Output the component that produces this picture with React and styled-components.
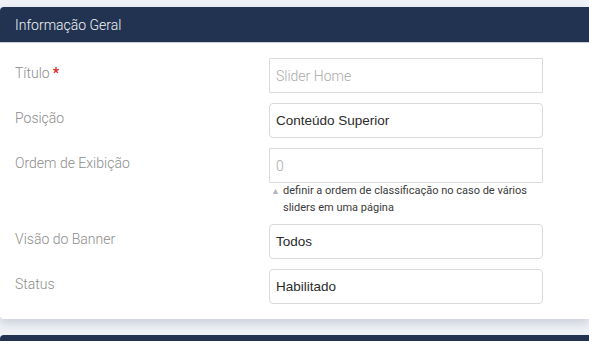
import React from 'react';
import styled, { createGlobalStyle } from 'styled-components';

const GlobalStyle = createGlobalStyle`
  body {
    margin: 0;
    background: #eef1f6;
    font-family: Roboto, "Liberation Sans", sans-serif;
    overflow: hidden;
  }
`;

const Page = styled.div`
  padding-top: 7px;
  width: 589px;
  height: 341px;
  box-sizing: border-box;
`;

const Card = styled.section`
  background: #fff;
  border-radius: 4px 0 0 4px;
  box-shadow: 0 4px 10px rgba(40, 50, 70, 0.18);
  margin-bottom: 16px;
`;

const CardHeader = styled.div`
  background: #213350;
  color: #f1f3f7;
  height: 35px;
  border-bottom: 1px solid #c9cdd5;
  border-radius: 4px 0 0 0;
  display: flex;
  align-items: center;
  padding: 0 15px;
  font-size: 14px;
  font-weight: 300;
`;

const CardBody = styled.div`
  display: grid;
  grid-template-columns: 254px 274px;
  row-gap: 10px;
  padding: 15px 0 15px 15px;
`;

const Label = styled.label`
  color: #8c8c8c;
  font-size: 14px;
  font-weight: 300;
  line-height: 20px;
  padding-top: 5px;
`;

const Required = styled.span`
  color: #e2231a;
  font-weight: 700;
  margin-left: 3px;
`;

const Field = styled.div`
  display: flex;
  flex-direction: column;
`;

const TextInput = styled.div`
  box-sizing: border-box;
  height: 35px;
  border: 1px solid #d9d9de;
  border-radius: 1px;
  padding: 0 6px;
  display: flex;
  align-items: center;
  font-family: Roboto, sans-serif;
  font-weight: 300;
  font-size: 14px;
  color: #a9a9a9;
`;

const SelectBox = styled.div`
  box-sizing: border-box;
  height: 35px;
  border: 1px solid #d9d9de;
  border-radius: 4px;
  padding: 0 6px;
  display: flex;
  align-items: center;
  font-family: "Liberation Sans", Arial, sans-serif;
  font-size: 13.5px;
  color: #2b2b2b;
`;

const Help = styled.div`
  display: grid;
  grid-template-columns: 14px 1fr;
  margin: -1px 0 -2px;
  font-size: 11px;
  line-height: 17px;
  color: #3a3a3a;
`;

const Caret = styled.span`
  color: #b4b8bf;
  font-size: 9px;
  line-height: 17px;
  padding-left: 2px;
  padding-top: 1px;
`;

const NextHeader = styled.div`
  background: #213350;
  height: 20px;
  border-radius: 4px 0 0 0;
`;

export default function App() {
  return (
    <Page>
      <GlobalStyle />
      <Card>
        <CardHeader>Informação Geral</CardHeader>
        <CardBody>
          <Label>Título<Required>*</Required></Label>
          <TextInput>Slider Home</TextInput>

          <Label>Posição</Label>
          <SelectBox>Conteúdo Superior</SelectBox>

          <Label>Ordem de Exibição</Label>
          <Field>
            <TextInput>0</TextInput>
            <Help>
              <Caret>▲</Caret>
              <span>definir a ordem de classificação no caso de vários sliders em uma página</span>
            </Help>
          </Field>

          <Label>Visão do Banner</Label>
          <SelectBox>Todos</SelectBox>

          <Label>Status</Label>
          <SelectBox>Habilitado</SelectBox>
        </CardBody>
      </Card>
      <NextHeader />
    </Page>
  );
}
